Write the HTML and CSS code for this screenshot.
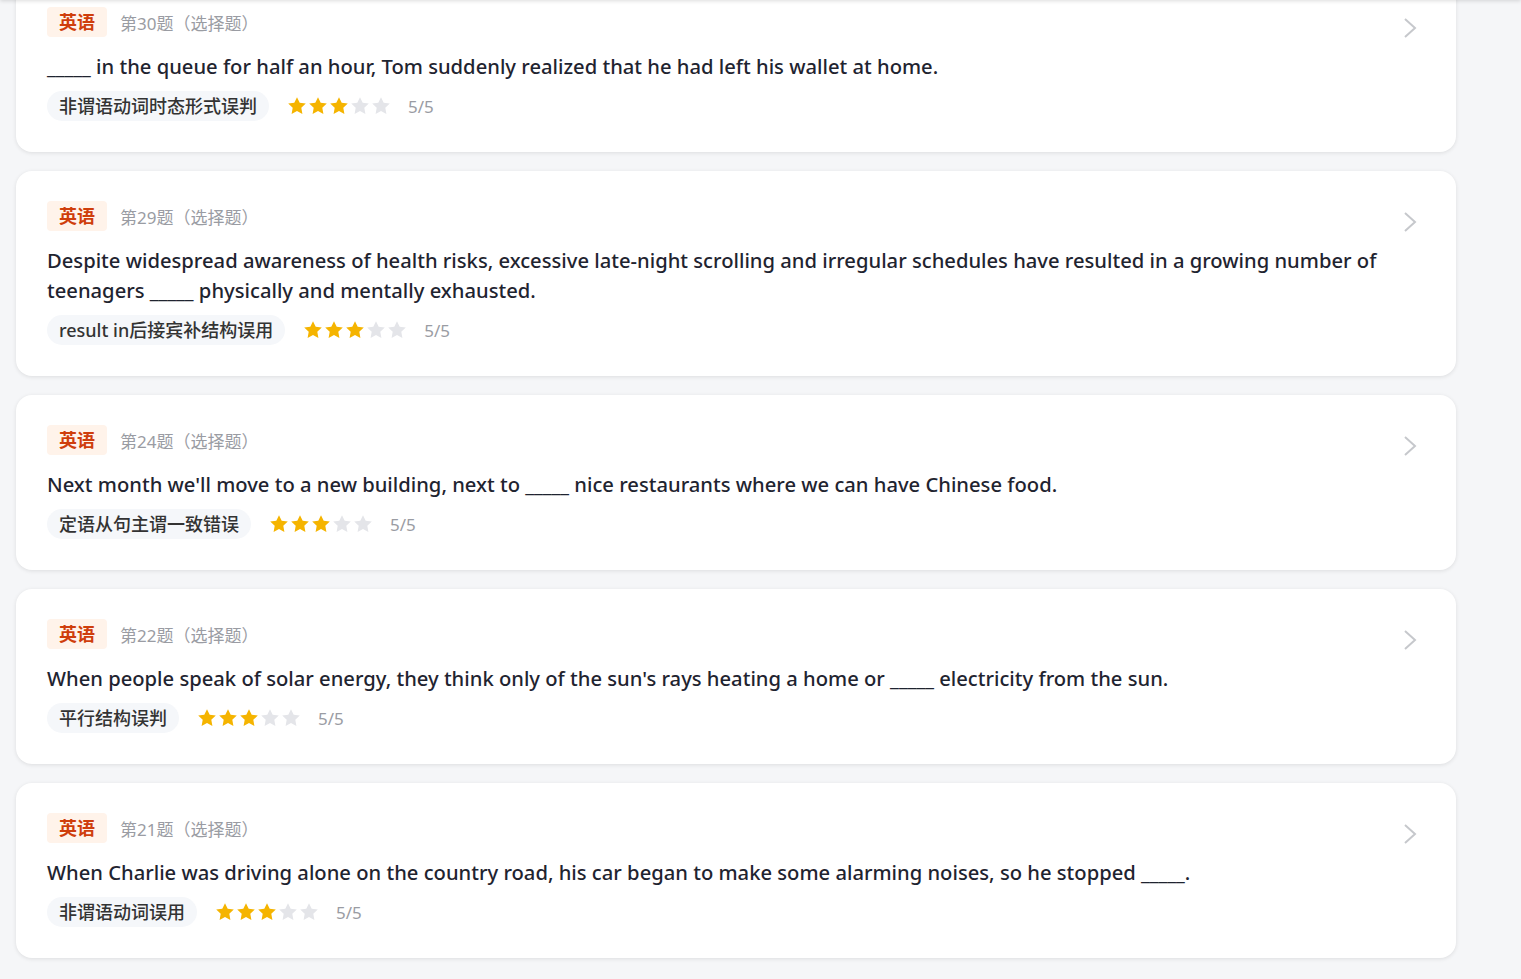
FILE: index.html
```html
<!DOCTYPE html>
<html lang="zh-CN">
<head>
    <meta charset="UTF-8">
    <meta name="viewport" content="width=device-width, initial-scale=1.0">
    <title>错题列表</title>
    <link rel="stylesheet" href="styles.css">
</head>
<body>
    <div class="top-shade"></div>
    <div class="list">
        <div class="card">
            <div class="card-body">
                <div class="meta"><span class="subject">英语</span><span class="qno">第30题（选择题）</span></div>
                <p class="question">_____ in the queue for half an hour, Tom suddenly realized that he had left his wallet at home.</p>
                <div class="info"><span class="chip">非谓语动词时态形式误判</span><span class="stars" data-level="3"></span><span class="score">5/5</span></div>
            </div>
            <svg class="arrow" viewBox="0 0 14 22"><path d="M2 2 L12 11 L2 20" /></svg>
        </div>
        <div class="card">
            <div class="card-body">
                <div class="meta"><span class="subject">英语</span><span class="qno">第29题（选择题）</span></div>
                <p class="question">Despite widespread awareness of health risks, excessive late-night scrolling and irregular schedules have resulted in a growing number of teenagers _____ physically and mentally exhausted.</p>
                <div class="info"><span class="chip">result in后接宾补结构误用</span><span class="stars" data-level="3"></span><span class="score">5/5</span></div>
            </div>
            <svg class="arrow" viewBox="0 0 14 22"><path d="M2 2 L12 11 L2 20" /></svg>
        </div>
        <div class="card">
            <div class="card-body">
                <div class="meta"><span class="subject">英语</span><span class="qno">第24题（选择题）</span></div>
                <p class="question">Next month we'll move to a new building, next to _____ nice restaurants where we can have Chinese food.</p>
                <div class="info"><span class="chip">定语从句主谓一致错误</span><span class="stars" data-level="3"></span><span class="score">5/5</span></div>
            </div>
            <svg class="arrow" viewBox="0 0 14 22"><path d="M2 2 L12 11 L2 20" /></svg>
        </div>
        <div class="card">
            <div class="card-body">
                <div class="meta"><span class="subject">英语</span><span class="qno">第22题（选择题）</span></div>
                <p class="question">When people speak of solar energy, they think only of the sun's rays heating a home or _____ electricity from the sun.</p>
                <div class="info"><span class="chip">平行结构误判</span><span class="stars" data-level="3"></span><span class="score">5/5</span></div>
            </div>
            <svg class="arrow" viewBox="0 0 14 22"><path d="M2 2 L12 11 L2 20" /></svg>
        </div>
        <div class="card">
            <div class="card-body">
                <div class="meta"><span class="subject">英语</span><span class="qno">第21题（选择题）</span></div>
                <p class="question">When Charlie was driving alone on the country road, his car began to make some alarming noises, so he stopped _____.</p>
                <div class="info"><span class="chip">非谓语动词误用</span><span class="stars" data-level="3"></span><span class="score">5/5</span></div>
            </div>
            <svg class="arrow" viewBox="0 0 14 22"><path d="M2 2 L12 11 L2 20" /></svg>
        </div>
    </div>

    <script>
        const starPath = 'M10 1.2l2.7 5.6 6.1.8-4.5 4.2 1.1 6.1L10 15l-5.4 2.9 1.1-6.1-4.5-4.2 6.1-.8z';

        document.querySelectorAll('.stars').forEach(el => {
            const level = parseInt(el.dataset.level, 10);
            let html = '';
            for (let i = 0; i < 5; i++) {
                const cls = i < level ? 'star on' : 'star';
                html += `<svg class="${cls}" viewBox="0 0 20 20"><path d="${starPath}" /></svg>`;
            }
            el.innerHTML = html;
        });
    </script>
</body>
</html>
```

FILE: styles.css
```css
body {
    margin: 0;
    background-color: #f5f6f8;
    font-family: "Noto Sans", "Noto Sans CJK SC", sans-serif;
    color: #1f2430;
}

.top-shade {
    position: fixed;
    left: 0;
    right: 0;
    top: -40px;
    height: 40px;
    box-shadow: 0 1px 4px rgba(0, 0, 0, 0.14);
    z-index: 5;
}

.list {
    display: flex;
    flex-direction: column;
    gap: 19px;
    width: 1440px;
    margin: -23px 0 0 16px;
    padding-bottom: 20px;
}

.card {
    display: flex;
    align-items: flex-start;
    background-color: #fff;
    border-radius: 16px;
    padding: 30px 39px 31px 31px;
    box-shadow: 0 1px 4px rgba(0, 0, 0, 0.1);
}

.card-body {
    flex: 1;
    min-width: 0;
}

.meta {
    display: flex;
    align-items: center;
    gap: 13px;
}

.subject {
    display: inline-block;
    height: 30px;
    line-height: 30px;
    padding: 0 12px;
    border-radius: 4px;
    background-color: #fff3ea;
    color: #cf3e0c;
    font-size: 18px;
    font-weight: 700;
}

.qno {
    color: #9a9ca3;
    font-size: 17px;
}

.question {
    margin: 14px 0 0;
    font-size: 20.2px;
    font-weight: 500;
    line-height: 30px;
    color: #1f2430;
}

.info {
    display: flex;
    align-items: center;
    margin-top: 10px;
}

.chip {
    display: inline-block;
    height: 30px;
    line-height: 30px;
    padding: 0 12px;
    border-radius: 15px;
    background-color: #f5f7fa;
    color: #333;
    font-size: 18px;
    font-weight: 500;
}

.stars {
    display: flex;
    gap: 1px;
    margin-left: 18px;
}

.star {
    width: 20px;
    height: 20px;
    fill: #e4e5e9;
}

.star.on {
    fill: #f5b400;
}

.score {
    margin-left: 17px;
    color: #9a9ca3;
    font-size: 17px;
}

.arrow {
    width: 14px;
    height: 22px;
    margin-top: 10px;
    fill: none;
    stroke: #c6c8cc;
    stroke-width: 2;
    flex-shrink: 0;
}
```
